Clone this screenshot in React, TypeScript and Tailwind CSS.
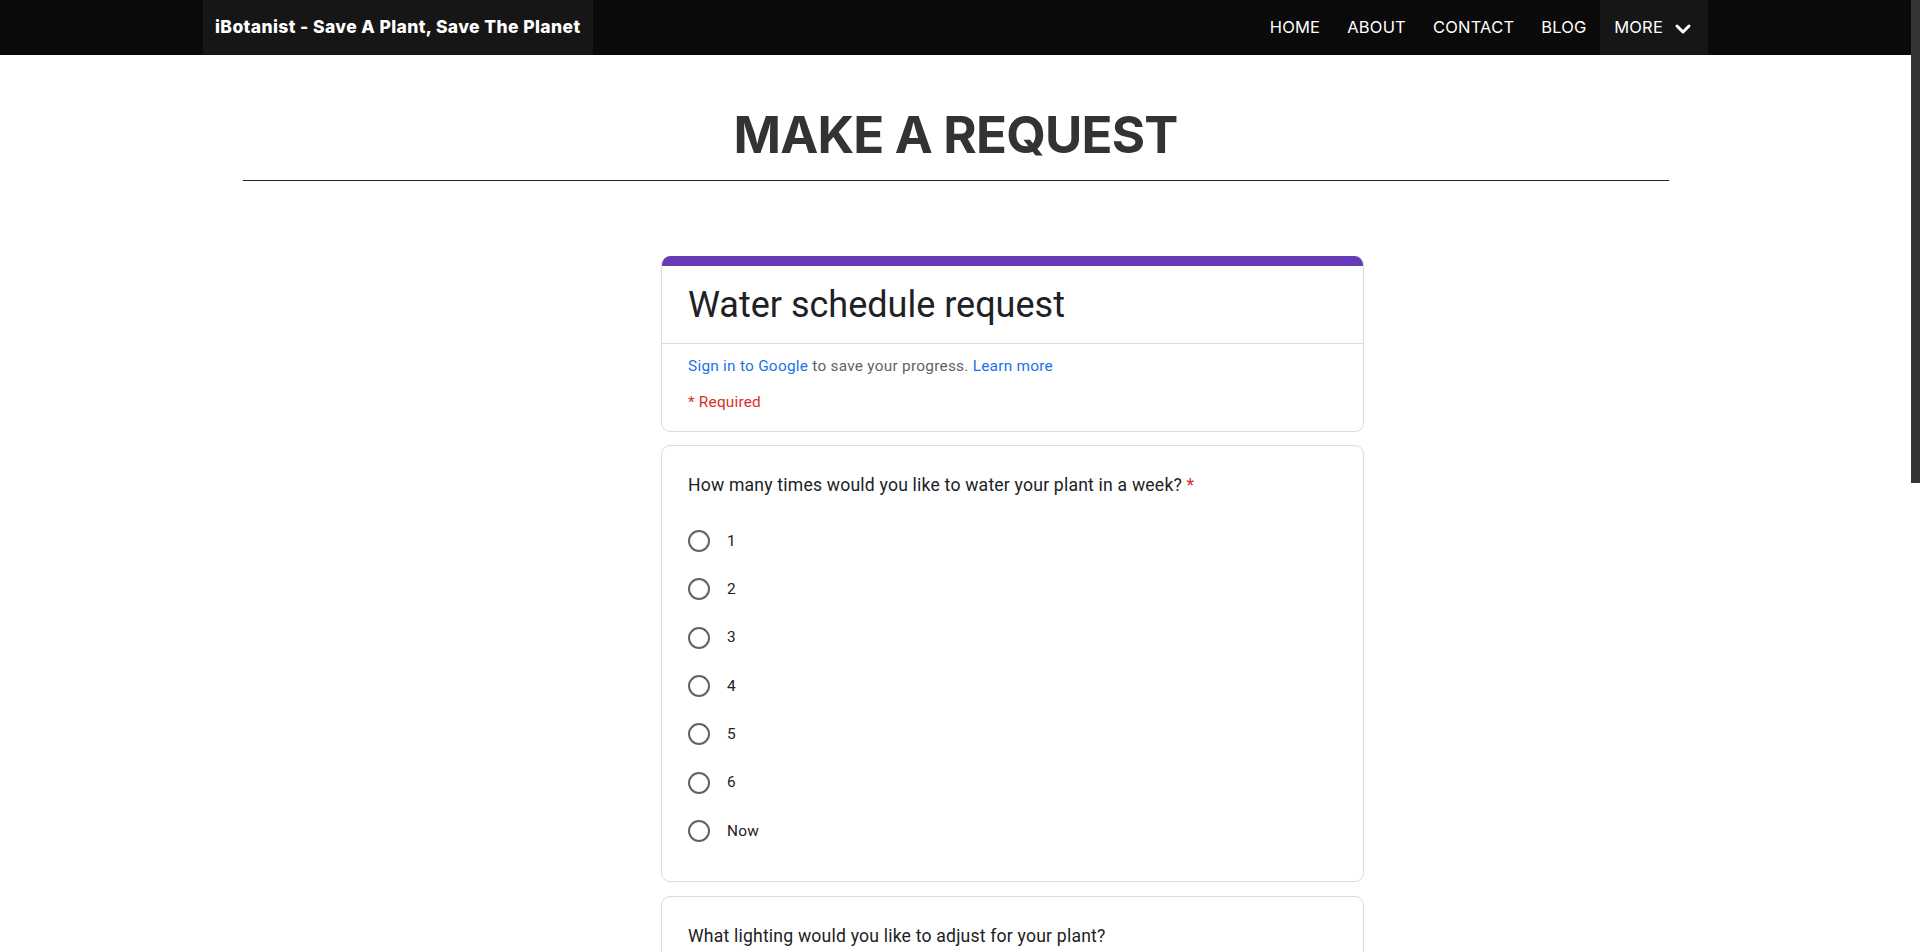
import React from "react";
import { ChevronDown } from "lucide-react";

const options = ["1", "2", "3", "4", "5", "6", "Now"];
const lighting = ["Full sun", "Partial sun", "Shade", "Grow light"];

function Radio({ label }: { label: string }) {
  return (
    <div className="flex items-center h-[48.33px]">
      <div className="w-[22px] h-[22px] rounded-full border-2 border-[#5f6368] shrink-0" />
      <span className="ml-[17px] text-[15.4px] text-[#202124] tracking-[0.2px]">{label}</span>
    </div>
  );
}

export default function App() {
  return (
    <div className="flex h-screen overflow-hidden bg-white">
      <div className="flex-1 min-w-0">
        <nav className="h-[55px] bg-[#0a0a0a] w-full" style={{ fontFamily: "Inter, 'Noto Sans', sans-serif" }}>
          <div className="w-[1505px] mx-auto h-full flex items-stretch justify-between">
            <div className="bg-[#161616] px-3 flex items-center">
              <span className="text-white font-extrabold text-[17.5px] tracking-[0.4px]">iBotanist - Save A Plant, Save The Planet</span>
            </div>
            <div className="flex items-stretch">
              {["HOME", "ABOUT", "CONTACT", "BLOG"].map((l) => (
                <div key={l} className="px-[13.5px] flex items-center text-white text-[16.5px] tracking-[0.2px]">
                  {l}
                </div>
              ))}
              <div className="bg-[#161616] pl-[14px] pr-[13px] flex items-center text-white text-[16.5px] tracking-[0.2px]">
                MORE
                <ChevronDown size={24} strokeWidth={3} className="ml-[8px] mt-[2px]" />
              </div>
            </div>
          </div>
        </nav>

        <div className="w-[1426px] mx-auto pt-[48px]">
          <h1
            className="text-center text-[51px] leading-[64px] font-bold text-[#333333] tracking-[-0.8px]"
            style={{ fontFamily: "Inter, 'Noto Sans', sans-serif" }}
          >
            MAKE A REQUEST
          </h1>
          <div className="mt-[13px] h-px bg-[#222222]" />
        </div>

        <div className="ml-[661px] w-[703px] mt-[75px] pb-[40px]" style={{ fontFamily: "Roboto, Arial, sans-serif" }}>
          <div className="rounded-[9px] overflow-hidden border border-[#dadce0] border-t-0">
            <div className="h-[10px] bg-[#673ab7] -mx-px" />
            <div className="px-[26px] pt-[17px] pb-[16px] border-b border-[#dadce0]">
              <div className="text-[36px] leading-[44px] text-[#202124]">Water schedule request</div>
            </div>
            <div className="px-[26px] pt-[12px] pb-[19px]">
              <div className="text-[15.4px] leading-[20px] text-[#5f6368] tracking-[0.25px]">
                <span className="text-[#1a73e8]">Sign in to Google</span> to save your progress.{" "}
                <span className="text-[#1a73e8]">Learn more</span>
              </div>
              <div className="mt-[16px] text-[15.4px] leading-[20px] text-[#d93025] tracking-[0.2px]">* Required</div>
            </div>
          </div>

          <div className="mt-[13px] rounded-[9px] border border-[#dadce0] px-[26px] pt-[27px] pb-[26px]">
            <div className="text-[17.6px] leading-[24px] text-[#202124] tracking-[0.2px]">
              How many times would you like to water your plant in a week?{" "}
              <span className="text-[#d93025]">*</span>
            </div>
            <div className="mt-[20px]">
              {options.map((o) => (
                <Radio key={o} label={o} />
              ))}
            </div>
          </div>

          <div className="mt-[14px] rounded-[9px] border border-[#dadce0] px-[26px] pt-[27px] pb-[26px]">
            <div className="text-[17.6px] leading-[24px] text-[#202124] tracking-[0.2px]">
              What lighting would you like to adjust for your plant?
            </div>
            <div className="mt-[20px]">
              {lighting.map((o) => (
                <Radio key={o} label={o} />
              ))}
            </div>
          </div>

          <div className="mt-[14px] rounded-[9px] border border-[#dadce0] px-[26px] pt-[27px] pb-[26px]">
            <div className="text-[17.6px] leading-[24px] text-[#202124] tracking-[0.2px]">
              Any additional notes about your plant?
            </div>
            <div className="mt-[30px] w-1/2 border-b border-[#dadce0] pb-[8px] text-[15.4px] text-[#70757a]">Your answer</div>
          </div>

          <div className="mt-[22px] flex items-center justify-between">
            <div className="bg-[#673ab7] text-white text-[15.4px] font-medium rounded-[4px] px-[26px] py-[10px]">Submit</div>
            <div className="text-[#673ab7] text-[15.4px] font-medium">Clear form</div>
          </div>
          <div className="mt-[30px] text-[12px] text-[#70757a]">Never submit passwords through Google Forms.</div>
          <div className="h-[400px]" />
        </div>
      </div>
      <div className="w-[9px] shrink-0 bg-white">
        <div className="h-[483px] bg-[#353535]" />
      </div>
    </div>
  );
}
